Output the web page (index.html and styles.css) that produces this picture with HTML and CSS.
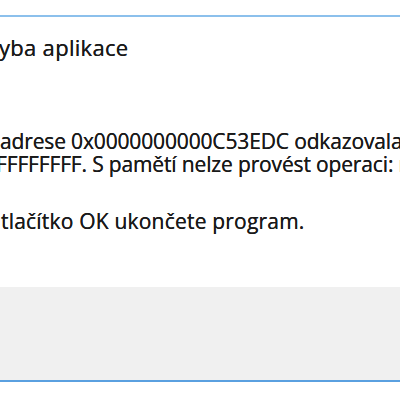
FILE: index.html
```html
<!DOCTYPE html>
<html lang="cs">
<head>
<meta charset="utf-8">
<link rel="stylesheet" href="styles.css">
</head>
<body>
<div class="dialog">
  <div class="titlebar">
    <span class="title">yba aplikace</span>
  </div>
  <div class="content">
    <p class="line l1">adrese 0x0000000000C53EDC odkazovala na paměť na adrese</p>
    <p class="line l2">FFFFFFFF. S pamětí nelze provést operaci: read.</p>
    <p class="line l3">tlačítko OK ukončete program.</p>
  </div>
  <div class="footer"></div>
</div>
</body>
</html>
```
FILE: styles.css
```css
html, body {
  margin: 0;
  padding: 0;
  background: #ffffff;
  overflow: hidden;
  width: 400px;
  height: 400px;
}
.dialog {
  width: 400px;
  overflow: hidden;
  font-family: "Open Sans", "Noto Sans", sans-serif;
  color: #1a1a1a;
  border-bottom: 2px solid #5aa0e0;
}
.titlebar {
  margin-top: 15px;
  border-top: 2px solid #8cc0ec;
  height: 60px;
  padding-top: 17px;
  box-sizing: border-box;
}
.title {
  display: block;
  font-size: 22px;
  line-height: 26px;
  letter-spacing: 0.3px;
  white-space: nowrap;
  margin-left: -1px;
  text-shadow: 0 0 0.6px #1a1a1a;
}
.content {
  height: 212px;
  padding-top: 55px;
  box-sizing: border-box;
}
.line {
  margin: 0;
  font-size: 21px;
  line-height: 23px;
  letter-spacing: 0.2px;
  white-space: nowrap;
  text-shadow: 0 0 0.6px #1a1a1a;
}
.l1 { margin-left: 0px; letter-spacing: -0.15px; }
.l2 { margin-left: -4px; letter-spacing: -0.15px; }
.l3 { margin-top: 34px; margin-left: 1px; }
.footer {
  height: 93px;
  background: #f0f0f0;
}
```
